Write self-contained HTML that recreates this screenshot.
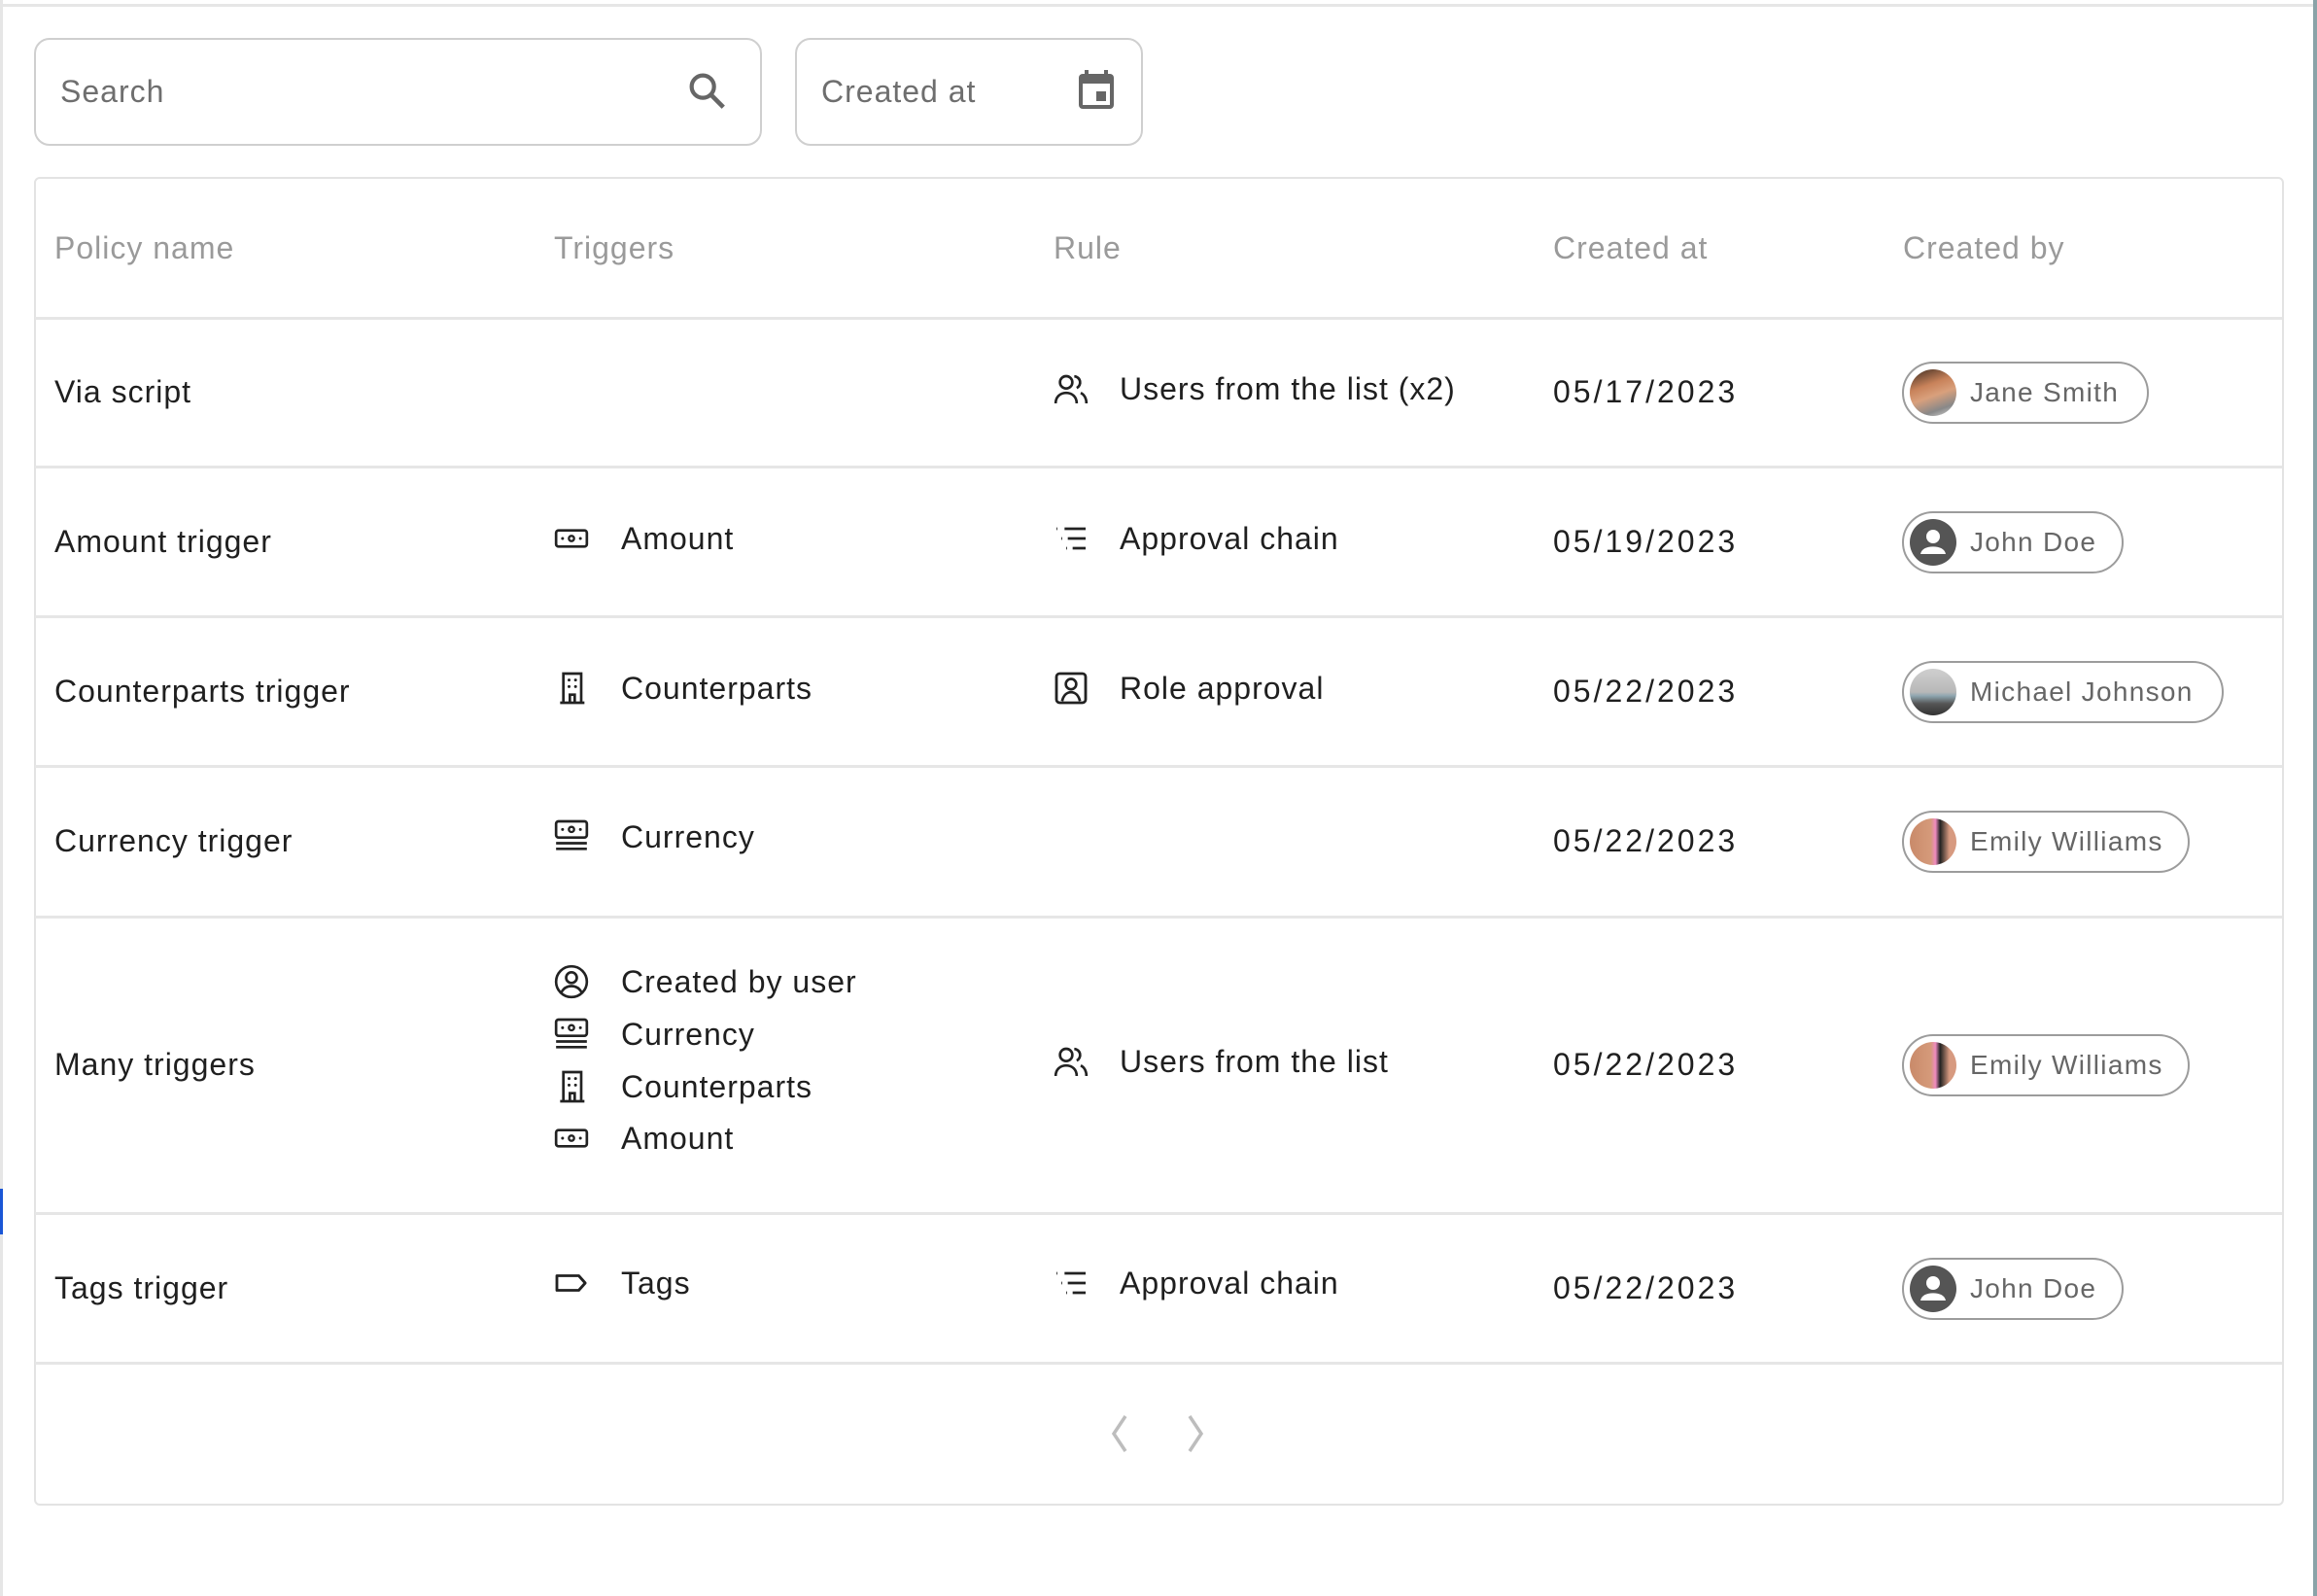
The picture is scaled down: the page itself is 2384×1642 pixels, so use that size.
<!DOCTYPE html>
<html><head><meta charset="utf-8">
<style>
*{margin:0;padding:0;box-sizing:border-box}
body{width:2384px;height:1642px;background:#fff;position:relative;overflow:hidden;font-family:"Liberation Sans",sans-serif}
.a{position:absolute}
.t{position:absolute;font-size:32px;line-height:40px;color:#1f1f1f;white-space:nowrap;letter-spacing:1px}
.d{letter-spacing:3px}
.h{position:absolute;font-size:32px;line-height:40px;color:#9a9a9a;white-space:nowrap;top:235px;letter-spacing:1px}
.hr{position:absolute;left:36px;width:2312px;height:3px;background:#e6e6e6}
.ic{position:absolute;width:40px;height:40px}
.chip{position:absolute;left:1957px;height:64px;border:2px solid #9c9c9c;border-radius:32px;font-size:28px;color:#666;line-height:60px;padding-left:68px;white-space:nowrap;letter-spacing:1.3px}
.av{position:absolute;left:6px;top:6px;width:48px;height:48px;border-radius:50%;overflow:hidden}
</style></head><body>
<div class="a" style="left:0;top:4px;width:2384px;height:3px;background:#e6e6e6"></div>
<div class="a" style="left:0;top:0;width:3px;height:1642px;background:#e6e6e6"></div>
<div class="a" style="left:0;top:1223px;width:3px;height:47px;background:#1a56d6"></div>
<div class="a" style="left:2380px;top:0;width:4px;height:1642px;background:#8aa3a8"></div>

<div class="a" style="left:35px;top:39px;width:749px;height:111px;border:2px solid #cfcfcf;border-radius:16px"></div>
<div class="t" style="left:62px;top:74px;color:#6e6e6e">Search</div>
<svg class="a" style="left:704px;top:70px" width="46" height="46" viewBox="0 0 24 24"><circle cx="10" cy="10" r="6" fill="none" stroke="#666" stroke-width="2.2"/><path d="M14.5 14.5L21 21" stroke="#666" stroke-width="2.4"/></svg>
<div class="a" style="left:818px;top:39px;width:358px;height:111px;border:2px solid #cfcfcf;border-radius:16px"></div>
<div class="t" style="left:845px;top:74px;color:#6e6e6e">Created at</div>
<svg class="a" style="left:1104px;top:68px" width="48" height="48" viewBox="0 0 24 24"><path d="M7 2v3M17 2v3" stroke="#666" stroke-width="2"/><rect x="3" y="4" width="18" height="18" rx="2" fill="#666"/><rect x="5" y="9" width="14" height="11" fill="#fff"/><rect x="12" y="13" width="5" height="5" fill="#666"/></svg>

<div class="a" style="left:35px;top:182px;width:2315px;height:1367px;border:2px solid #e3e3e3;border-radius:6px"></div>
<div class="h" style="left:56px">Policy name</div>
<div class="h" style="left:570px">Triggers</div>
<div class="h" style="left:1084px">Rule</div>
<div class="h" style="left:1598px">Created at</div>
<div class="h" style="left:1958px">Created by</div>
<div class="hr" style="top:326px"></div>
<div class="hr" style="top:479px"></div>
<div class="hr" style="top:633px"></div>
<div class="hr" style="top:787px"></div>
<div class="hr" style="top:942px"></div>
<div class="hr" style="top:1247px"></div>
<div class="hr" style="top:1401px"></div>

<div class="t" style="left:56px;top:383px">Via script</div>
<div class="t" style="left:56px;top:537px">Amount trigger</div>
<div class="t" style="left:56px;top:691px">Counterparts trigger</div>
<div class="t" style="left:56px;top:845px">Currency trigger</div>
<div class="t" style="left:56px;top:1075px">Many triggers</div>
<div class="t" style="left:56px;top:1305px">Tags trigger</div>

<div class="t d" style="left:1598px;top:383px">05/17/2023</div>
<div class="t d" style="left:1598px;top:537px">05/19/2023</div>
<div class="t d" style="left:1598px;top:691px">05/22/2023</div>
<div class="t d" style="left:1598px;top:845px">05/22/2023</div>
<div class="t d" style="left:1598px;top:1075px">05/22/2023</div>
<div class="t d" style="left:1598px;top:1305px">05/22/2023</div>

<svg class="ic" style="left:568px;top:534px" viewBox="0 0 24 24"><rect x="2.5" y="7" width="19" height="10" rx="1.5" fill="none" stroke="#222" stroke-width="1.6"/><circle cx="12" cy="12" r="1.6" fill="none" stroke="#222" stroke-width="1.4"/><circle cx="6.5" cy="12" r=".9" fill="#222"/><circle cx="17.5" cy="12" r=".9" fill="#222"/></svg>
<div class="t" style="left:639px;top:534px">Amount</div>
<svg class="ic" style="left:568px;top:688px" viewBox="0 0 24 24"><path d="M5 21h15M7 21V3h11v18M11 21v-5h3v5" fill="none" stroke="#222" stroke-width="1.6"/><circle cx="10.5" cy="7" r=".9" fill="#222"/><circle cx="14.5" cy="7" r=".9" fill="#222"/><circle cx="10.5" cy="11" r=".9" fill="#222"/><circle cx="14.5" cy="11" r=".9" fill="#222"/></svg>
<div class="t" style="left:639px;top:688px">Counterparts</div>
<svg class="ic" style="left:568px;top:840px" viewBox="0 0 24 24"><rect x="2.5" y="3" width="19" height="10" rx="1.5" fill="none" stroke="#222" stroke-width="1.6"/><circle cx="12" cy="8" r="1.6" fill="none" stroke="#222" stroke-width="1.4"/><circle cx="6.5" cy="8" r=".9" fill="#222"/><circle cx="17.5" cy="8" r=".9" fill="#222"/><path d="M2.5 16.5h19M2.5 20h19" stroke="#222" stroke-width="1.6"/></svg>
<div class="t" style="left:639px;top:841px">Currency</div>

<svg class="ic" style="left:568px;top:990px" viewBox="0 0 24 24"><circle cx="12" cy="12" r="9.5" fill="none" stroke="#222" stroke-width="1.6"/><circle cx="12" cy="9.5" r="3.3" fill="none" stroke="#222" stroke-width="1.6"/><path d="M5.5 19c1.5-3 3.8-4.3 6.5-4.3s5 1.3 6.5 4.3" fill="none" stroke="#222" stroke-width="1.6"/></svg>
<div class="t" style="left:639px;top:990px">Created by user</div>
<svg class="ic" style="left:568px;top:1044px" viewBox="0 0 24 24"><rect x="2.5" y="3" width="19" height="10" rx="1.5" fill="none" stroke="#222" stroke-width="1.6"/><circle cx="12" cy="8" r="1.6" fill="none" stroke="#222" stroke-width="1.4"/><circle cx="6.5" cy="8" r=".9" fill="#222"/><circle cx="17.5" cy="8" r=".9" fill="#222"/><path d="M2.5 16.5h19M2.5 20h19" stroke="#222" stroke-width="1.6"/></svg>
<div class="t" style="left:639px;top:1044px">Currency</div>
<svg class="ic" style="left:568px;top:1098px" viewBox="0 0 24 24"><path d="M5 21h15M7 21V3h11v18M11 21v-5h3v5" fill="none" stroke="#222" stroke-width="1.6"/><circle cx="10.5" cy="7" r=".9" fill="#222"/><circle cx="14.5" cy="7" r=".9" fill="#222"/><circle cx="10.5" cy="11" r=".9" fill="#222"/><circle cx="14.5" cy="11" r=".9" fill="#222"/></svg>
<div class="t" style="left:639px;top:1098px">Counterparts</div>
<svg class="ic" style="left:568px;top:1151px" viewBox="0 0 24 24"><rect x="2.5" y="7" width="19" height="10" rx="1.5" fill="none" stroke="#222" stroke-width="1.6"/><circle cx="12" cy="12" r="1.6" fill="none" stroke="#222" stroke-width="1.4"/><circle cx="6.5" cy="12" r=".9" fill="#222"/><circle cx="17.5" cy="12" r=".9" fill="#222"/></svg>
<div class="t" style="left:639px;top:1151px">Amount</div>
<svg class="ic" style="left:568px;top:1300px" viewBox="0 0 24 24"><path d="M3 7.5h13.5l4 4.5-4 4.5H3z" fill="none" stroke="#222" stroke-width="1.7" stroke-linejoin="round"/></svg>
<div class="t" style="left:639px;top:1300px">Tags</div>

<svg class="ic" style="left:1082px;top:380px" viewBox="0 0 24 24"><circle cx="9" cy="8" r="3.8" fill="none" stroke="#222" stroke-width="1.6"/><path d="M2.5 21c0-4 2.8-6.5 6.5-6.5s6.5 2.5 6.5 6.5" fill="none" stroke="#222" stroke-width="1.6"/><path d="M14 4.3a3.8 3.8 0 0 1 1.5 7.2M18 14.5c2 1 3.5 3.3 3.5 6.5" fill="none" stroke="#222" stroke-width="1.6"/></svg>
<div class="t" style="left:1152px;top:380px">Users from the list (x2)</div>
<svg class="ic" style="left:1082px;top:534px" viewBox="0 0 24 24"><path d="M3 6h.5M8 6h13M6 12h.5M10 12h11M9 18h.5M13 18h8" stroke="#222" stroke-width="1.7"/></svg>
<div class="t" style="left:1152px;top:534px">Approval chain</div>
<svg class="ic" style="left:1082px;top:688px" viewBox="0 0 24 24"><rect x="3" y="3" width="18" height="18" rx="2" fill="none" stroke="#222" stroke-width="1.7"/><circle cx="12" cy="9.5" r="3.2" fill="none" stroke="#222" stroke-width="1.6"/><path d="M6.5 20c.8-3.5 2.8-5.5 5.5-5.5s4.7 2 5.5 5.5" fill="none" stroke="#222" stroke-width="1.6"/></svg>
<div class="t" style="left:1152px;top:688px">Role approval</div>
<svg class="ic" style="left:1082px;top:1072px" viewBox="0 0 24 24"><circle cx="9" cy="8" r="3.8" fill="none" stroke="#222" stroke-width="1.6"/><path d="M2.5 21c0-4 2.8-6.5 6.5-6.5s6.5 2.5 6.5 6.5" fill="none" stroke="#222" stroke-width="1.6"/><path d="M14 4.3a3.8 3.8 0 0 1 1.5 7.2M18 14.5c2 1 3.5 3.3 3.5 6.5" fill="none" stroke="#222" stroke-width="1.6"/></svg>
<div class="t" style="left:1152px;top:1072px">Users from the list</div>
<svg class="ic" style="left:1082px;top:1300px" viewBox="0 0 24 24"><path d="M3 6h.5M8 6h13M6 12h.5M10 12h11M9 18h.5M13 18h8" stroke="#222" stroke-width="1.7"/></svg>
<div class="t" style="left:1152px;top:1300px">Approval chain</div>

<div class="chip" style="top:372px;width:254px">Jane Smith<div class="av" style="background:linear-gradient(160deg,#3a2a20 0%,#c8825a 35%,#d9a07c 55%,#888 80%,#ddd 100%)"></div></div>
<div class="chip" style="top:526px;width:228px">John Doe<div class="av" style="background:#555"><svg width="48" height="48" viewBox="0 0 24 24"><circle cx="12" cy="9" r="3.5" fill="#fff"/><path d="M5.5 18c.5-2.5 3-3.8 6.5-3.8s6 1.3 6.5 3.8z" fill="#fff"/></svg></div></div>
<div class="chip" style="top:680px;width:331px">Michael Johnson<div class="av" style="background:linear-gradient(180deg,#cfcfcf 0%,#b8b8b8 50%,#8fa6b0 58%,#555 75%,#333 100%)"></div></div>
<div class="chip" style="top:834px;width:296px">Emily Williams<div class="av" style="background:linear-gradient(90deg,#c98a6a 0%,#d59a7a 45%,#f08cc0 55%,#222 65%,#d79a80 85%)"></div></div>
<div class="chip" style="top:1064px;width:296px">Emily Williams<div class="av" style="background:linear-gradient(90deg,#c98a6a 0%,#d59a7a 45%,#f08cc0 55%,#222 65%,#d79a80 85%)"></div></div>
<div class="chip" style="top:1294px;width:228px">John Doe<div class="av" style="background:#555"><svg width="48" height="48" viewBox="0 0 24 24"><circle cx="12" cy="9" r="3.5" fill="#fff"/><path d="M5.5 18c.5-2.5 3-3.8 6.5-3.8s6 1.3 6.5 3.8z" fill="#fff"/></svg></div></div>

<svg class="a" style="left:1138px;top:1455px" width="28" height="40" viewBox="0 0 28 40"><path d="M20 2L8 20l12 18" fill="none" stroke="#bdbdbd" stroke-width="3.5"/></svg>
<svg class="a" style="left:1216px;top:1455px" width="28" height="40" viewBox="0 0 28 40"><path d="M8 2l12 18L8 38" fill="none" stroke="#bdbdbd" stroke-width="3.5"/></svg>
</body></html>
